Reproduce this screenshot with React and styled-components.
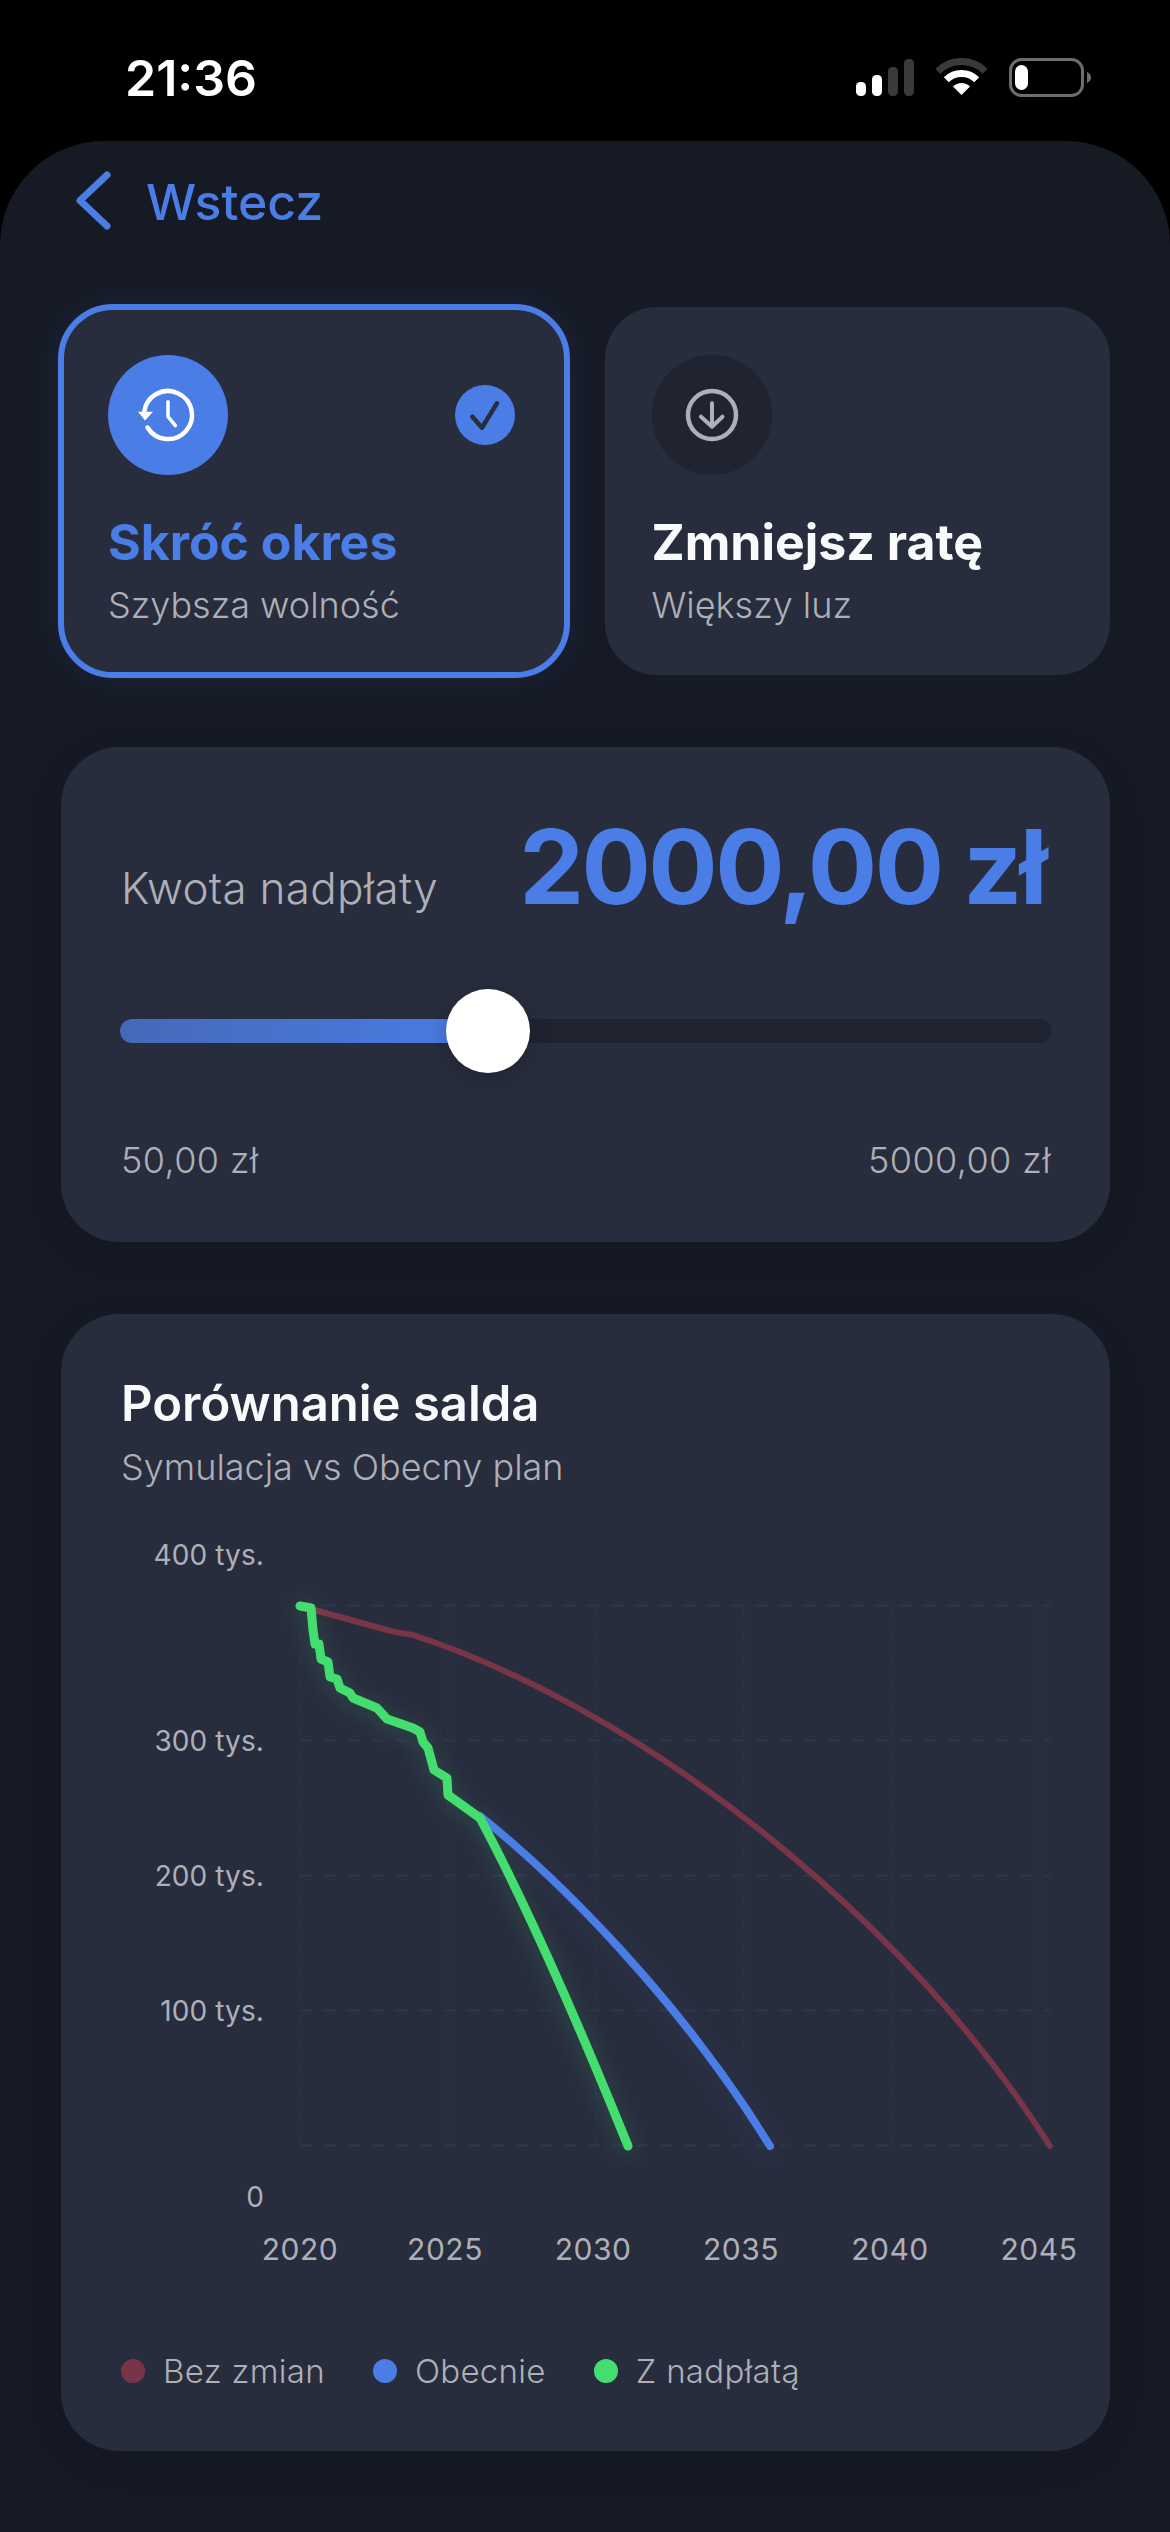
import styled, { createGlobalStyle } from "styled-components";

const BLUE = "#4a7de6";
const GREEN = "#44dd70";
const RED = "#793548";
const MUTED = "#aeb0b7";

const GlobalStyle = createGlobalStyle`
  html, body {
    margin: 0;
    background: #000;
    font-family: Inter, "Noto Sans", sans-serif;
  }
`;

const Screen = styled.div`
  width: 1170px;
  height: 2532px;
  overflow: hidden;
  display: flex;
  flex-direction: column;
  background: #000;
`;

const StatusBar = styled.div`
  height: 141px;
  flex: none;
  box-sizing: border-box;
  padding: 48px 79px 0 125px;
  display: flex;
  justify-content: space-between;
  align-items: flex-start;
`;

const Time = styled.div`
  color: #fff;
  font-size: 50px;
  line-height: 60px;
  font-weight: 600;
`;

const StatusIcons = styled.div`
  display: flex;
  align-items: flex-start;
  gap: 22px;
  padding-top: 10px;
`;

const Sheet = styled.div`
  flex: 1;
  box-sizing: border-box;
  padding: 0 60px 0 61px;
  background: #161a25;
  border-radius: 104px 104px 0 0;
`;

const BackRow = styled.div`
  height: 166px;
  box-sizing: border-box;
  padding: 30px 0 0 14px;
  display: flex;
  align-items: flex-start;
  gap: 35px;
  color: ${BLUE};
`;

const BackLabel = styled.span`
  font-size: 50px;
  line-height: 62px;
  font-weight: 500;
`;

const ModeGrid = styled.div`
  display: grid;
  grid-template-columns: 1fr 1fr;
  gap: 38px;
`;

const ModeCard = styled.div`
  height: 368px;
  box-sizing: border-box;
  padding: 48px 52px 0 47px;
  background: #282d3e;
  border-radius: 52px;
  ${(p) =>
    p.$active &&
    `
    outline: 6px solid ${BLUE};
    outline-offset: -3px;
    box-shadow: 0 0 36px rgba(74, 125, 230, 0.14);
  `}
`;

const ModeHeader = styled.div`
  display: flex;
  justify-content: space-between;
  align-items: center;
`;

const IconCircle = styled.div`
  width: 120px;
  height: 120px;
  border-radius: 50%;
  display: flex;
  align-items: center;
  justify-content: center;
  background: ${(p) => (p.$active ? BLUE : "#1f2430")};
`;

const CheckBadge = styled.div`
  width: 60px;
  height: 60px;
  border-radius: 50%;
  background: ${BLUE};
`;

const ModeTitle = styled.div`
  margin-top: 37px;
  font-size: 50px;
  line-height: 60px;
  font-weight: 700;
  color: ${(p) => (p.$active ? BLUE : "#f9fafb")};
`;

const Subtitle = styled.div`
  margin-top: 11px;
  font-size: 36px;
  line-height: 44px;
  font-weight: 300;
  color: ${MUTED};
`;

const Panel = styled.section`
  margin-top: 72px;
  padding: 60px 59px 0 60px;
  box-sizing: border-box;
  height: ${(p) => p.$height}px;
  background: #282d3e;
  border-radius: 58px;
  box-shadow: 0 10px 40px rgba(0, 0, 0, 0.1);
`;

const AmountRow = styled.div`
  display: flex;
  justify-content: space-between;
  align-items: baseline;
`;

const AmountLabel = styled.span`
  font-size: 44px;
  font-weight: 300;
  letter-spacing: 0.3px;
  color: ${MUTED};
`;

const AmountValue = styled.span`
  margin-right: 6px;
  font-size: 103px;
  line-height: 120px;
  font-weight: 700;
  letter-spacing: -2.6px;
  color: ${BLUE};
`;

const Track = styled.div`
  position: relative;
  height: 24px;
  margin: 92px -1px 95px -1px;
  border-radius: 12px;
  background: #1f2430;
`;

const TrackFill = styled.div`
  height: 100%;
  width: ${(p) => p.$pct}%;
  border-radius: 12px 0 0 12px;
  background: linear-gradient(90deg, #4569b8, ${BLUE});
`;

const Thumb = styled.div`
  position: absolute;
  left: calc(${(p) => p.$pct}% - 42px);
  top: -30px;
  width: 84px;
  height: 84px;
  border-radius: 50%;
  background: #fff;
  box-shadow: 0 6px 24px rgba(0, 0, 0, 0.22);
`;

const RangeRow = styled.div`
  display: flex;
  justify-content: space-between;
  font-size: 36px;
  line-height: 44px;
  font-weight: 300;
  letter-spacing: 0.4px;
  color: ${MUTED};
`;

const ChartTitle = styled.h2`
  margin: 0;
  font-size: 49px;
  line-height: 60px;
  font-weight: 600;
  color: #f9fafb;
`;

const ChartSvg = styled.svg`
  display: block;
  width: 1049px;
  height: 800px;
  margin-left: -60px;
  font-family: Inter, sans-serif;
`;

const GridLine = styled.line`
  stroke: ${(p) => (p.$vertical ? "#2a3043" : "#2d364b")};
  stroke-width: 2;
  stroke-dasharray: 12 12;
`;

const AxisText = styled.text`
  fill: ${MUTED};
  font-size: ${(p) => p.$size}px;
  font-weight: 400;
  letter-spacing: ${(p) => p.$spacing}px;
`;

const Curve = styled.path`
  fill: none;
  stroke: ${(p) => p.$color};
  stroke-width: ${(p) => p.$width};
  stroke-linecap: round;
  stroke-linejoin: round;
  filter: ${(p) => (p.$glow ? `drop-shadow(0 4px 10px ${p.$glow})` : "none")};
`;

const Legend = styled.div`
  margin-top: 60px;
  display: flex;
  gap: 48px;
`;

const LegendItem = styled.div`
  display: flex;
  align-items: center;
  gap: 18px;
  font-size: 33px;
  line-height: 44px;
  font-weight: 300;
  letter-spacing: 0.3px;
  color: ${MUTED};
`;

const Dot = styled.span`
  width: 24px;
  height: 24px;
  border-radius: 50%;
  background: ${(p) => p.$color};
`;

function SignalIcon() {
  return (
    <svg width="58" height="38" viewBox="0 0 58 38">
      <rect x="0" y="24" width="10" height="14" rx="4.5" fill="#fff" />
      <rect x="16" y="17" width="10" height="21" rx="4.5" fill="#fff" />
      <rect x="32" y="9" width="10" height="29" rx="4.5" fill="#3a3a3a" />
      <rect x="48" y="1" width="10" height="37" rx="4.5" fill="#3a3a3a" />
    </svg>
  );
}

function WifiIcon() {
  return (
    <svg width="51" height="38" viewBox="0 0 51 38" fill="none">
      <path d="M1.8 13.3A33.5 33.5 0 0 1 49.2 13.3" stroke="#3a3a3a" strokeWidth="7" />
      <path d="M10.3 21.8A21.5 21.5 0 0 1 40.7 21.8" stroke="#fff" strokeWidth="7" />
      <path d="M25.5 37L17 28.5A12 12 0 0 1 34 28.5Z" fill="#fff" />
    </svg>
  );
}

function BatteryIcon() {
  return (
    <svg width="82" height="39" viewBox="0 0 82 39" fill="none">
      <rect x="1.5" y="1.5" width="72" height="36" rx="11" stroke="#6d6d6d" strokeWidth="3" />
      <rect x="6" y="7" width="13" height="25" rx="6.5" fill="#fff" />
      <path d="M78 14c2.500 1 4 3 4 5.500s-1.500 4.500-4 5.500z" fill="#6d6d6d" />
    </svg>
  );
}

function BackChevron() {
  return (
    <svg width="36" height="62" viewBox="0 0 36 62" fill="none">
      <path d="M32 4L5 29.500L32 55" stroke={BLUE} strokeWidth="7" strokeLinecap="round" strokeLinejoin="round" />
    </svg>
  );
}

function HistoryIcon() {
  return (
    <svg width="64" height="64" viewBox="0 0 64 64" fill="none" stroke="#fff" strokeLinecap="round" strokeLinejoin="round">
      <path d="M8.200 29A24 24 0 1 1 11.500 44.500" strokeWidth="4.500" />
      <path d="M2 28.700H17L9 37.600Z" fill="#fff" stroke="none" />
      <path d="M32 18.700V33.700L39.400 42.700" strokeWidth="3.500" />
    </svg>
  );
}

function DownIcon() {
  return (
    <svg width="64" height="64" viewBox="0 0 64 64" fill="none" stroke={MUTED} strokeLinecap="round" strokeLinejoin="round">
      <circle cx="32" cy="32" r="24" strokeWidth="4.500" />
      <path d="M32 20.300V43.700M21 33.700L32 43.700L42.500 33.700" strokeWidth="4" />
    </svg>
  );
}

function CheckIcon() {
  return (
    <svg width="60" height="60" viewBox="0 0 60 60" fill="none">
      <path d="M17.400 31.700L27 42.700L42 18.300" stroke="#282d3e" strokeWidth="4.500" strokeLinecap="round" strokeLinejoin="round" />
    </svg>
  );
}

const polyline = (pts) => "M" + pts.map((p) => p.join(" ")).join("L");

const redPath =
  "M300 1606L387 1630C397 1633 403 1633 413 1635" +
  "C520 1670 640 1735 760 1830C870 1918 970 2020 1050 2146";

const bluePath = "M480 1816C560 1880 680 2000 770 2146";

const greenPath =
  polyline([
    [300, 1606], [311, 1608], [313, 1630], [315, 1644], [319, 1644], [321, 1659], [328, 1662], [330, 1677],
    [337, 1679], [340, 1688], [350, 1693], [353, 1698], [377, 1708], [387, 1719], [413, 1728], [420, 1732],
    [423, 1742], [428, 1748], [434, 1770], [447, 1778], [448, 1795], [480, 1818],
  ]) + "C520 1893 565 1990 628 2146";

const gridY = [1605.5, 1740.5, 1875.5, 2010.5, 2145.5];
const gridX = [300, 448, 596, 743.5, 891.7, 1040];
const yLabels = [["400 tys.", 1555], ["300 tys.", 1741], ["200 tys.", 1876], ["100 tys.", 2011], ["0", 2197]];
const xLabels = [["2020", 300], ["2025", 445], ["2030", 593], ["2035", 741], ["2040", 890], ["2045", 1039]];
const PCT = 39.5;

export default function App() {
  return (
    <Screen>
      <GlobalStyle />
      <StatusBar>
        <Time>21:36</Time>
        <StatusIcons>
          <SignalIcon />
          <WifiIcon />
          <BatteryIcon />
        </StatusIcons>
      </StatusBar>
      <Sheet>
        <BackRow>
          <BackChevron />
          <BackLabel>Wstecz</BackLabel>
        </BackRow>

        <ModeGrid>
          <ModeCard $active>
            <ModeHeader>
              <IconCircle $active><HistoryIcon /></IconCircle>
              <CheckBadge><CheckIcon /></CheckBadge>
            </ModeHeader>
            <ModeTitle $active>Skróć okres</ModeTitle>
            <Subtitle>Szybsza wolność</Subtitle>
          </ModeCard>
          <ModeCard>
            <ModeHeader>
              <IconCircle><DownIcon /></IconCircle>
            </ModeHeader>
            <ModeTitle>Zmniejsz ratę</ModeTitle>
            <Subtitle>Większy luz</Subtitle>
          </ModeCard>
        </ModeGrid>

        <Panel $height={495}>
          <AmountRow>
            <AmountLabel>Kwota nadpłaty</AmountLabel>
            <AmountValue>2000,00 zł</AmountValue>
          </AmountRow>
          <Track>
            <TrackFill $pct={PCT} />
            <Thumb $pct={PCT} />
          </Track>
          <RangeRow>
            <span>50,00 zł</span>
            <span>5000,00 zł</span>
          </RangeRow>
        </Panel>

        <Panel $height={1137}>
          <ChartTitle>Porównanie salda</ChartTitle>
          <Subtitle>Symulacja vs Obecny plan</Subtitle>
          <ChartSvg viewBox="61 1489 1049 800">
            {gridX.map((x) => (
              <GridLine key={x} $vertical x1={x} x2={x} y1={1606} y2={2146} />
            ))}
            {gridY.map((y) => (
              <GridLine key={y} x1={300} x2={1050} y1={y} y2={y} />
            ))}
            {yLabels.map(([t, y]) => (
              <AxisText key={t} $size={28} $spacing={0.1} x={264} y={y} textAnchor="end" dominantBaseline="central">{t}</AxisText>
            ))}
            {xLabels.map(([t, x]) => (
              <AxisText key={t} $size={30} $spacing={0.5} x={x} y={2249} textAnchor="middle" dominantBaseline="central">{t}</AxisText>
            ))}
            <Curve d={redPath} $color={RED} $width={6} />
            <Curve d={bluePath} $color={BLUE} $width={8} $glow="rgba(74,125,230,0.14)" />
            <Curve d={greenPath} $color={GREEN} $width={9} $glow="rgba(68,221,112,0.24)" />
          </ChartSvg>
          <Legend>
            <LegendItem><Dot $color={RED} />Bez zmian</LegendItem>
            <LegendItem><Dot $color={BLUE} />Obecnie</LegendItem>
            <LegendItem><Dot $color={GREEN} />Z nadpłatą</LegendItem>
          </Legend>
        </Panel>
      </Sheet>
    </Screen>
  );
}
